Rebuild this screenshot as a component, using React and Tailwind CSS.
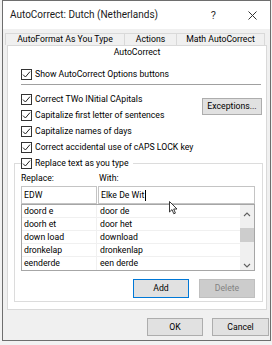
const ENTRIES = [
  ["doord e", "door de"],
  ["doorh et", "door het"],
  ["down load", "download"],
  ["dronkelap", "dronkenlap"],
  ["eenderde", "een derde"],
];

function Check() {
  return (
    <span className="w-[11px] h-[11px] border border-[#333333] bg-white flex items-center justify-center shrink-0">
      <svg width="9" height="9" viewBox="0 0 9 9">
        <path d="M1 4.6 L3.4 7 L8 1.6" fill="none" stroke="#222222" strokeWidth="1" />
      </svg>
    </span>
  );
}

function CheckRow({ label, className = "" }) {
  return (
    <div className={`flex items-center gap-[3px] h-[16px] ${className}`}>
      <Check />
      <span>{label}</span>
    </div>
  );
}

function Chevron({ up }) {
  return (
    <svg width="8" height="5" viewBox="0 0 8 5">
      <path d={up ? "M1 4 L4 1 L7 4" : "M1 1 L4 4 L7 1"} fill="none" stroke="#606060" strokeWidth="1.1" />
    </svg>
  );
}

export default function App() {
  return (
    <div className="w-[272px] h-[345px] bg-[#f2f2f2] overflow-hidden pl-[2px] font-['Roboto',sans-serif] text-[8.7px] text-black leading-none relative">
      <div className="w-[269px] h-[341px] border border-[#6e6e6e] bg-[#f0f0f0] flex flex-col">

        {/* title bar */}
        <div className="h-[28px] bg-white flex items-center pl-[7px] pr-[13px] shrink-0">
          <span className="text-[10px] text-[#1a1a1a]">AutoCorrect: Dutch (Netherlands)</span>
          <span className="ml-auto text-[11px] text-[#333]">?</span>
          <svg className="ml-[32px]" width="9" height="9" viewBox="0 0 9 9">
            <path d="M0.5 0.5 L8.5 8.5 M8.5 0.5 L0.5 8.5" stroke="#333" strokeWidth="1" />
          </svg>
        </div>

        {/* tabs */}
        <div className="pt-[4px] pl-[2px] flex h-[16px] shrink-0">
          <div className="w-[120px] h-[12px] border border-b-0 border-[#d9d9d9] flex items-center justify-center">AutoFormat As You Type</div>
          <div className="w-[52px] h-[12px] border border-b-0 border-l-0 border-[#d9d9d9] flex items-center justify-center">Actions</div>
          <div className="w-[88px] h-[12px] border border-b-0 border-l-0 border-[#d9d9d9] flex items-center justify-center">Math AutoCorrect</div>
        </div>

        {/* panel */}
        <div className="ml-[4px] w-[260px] h-[265px] border border-[#d9d9d9] bg-white shrink-0">
          <div className="h-[13px] flex items-center justify-center">AutoCorrect</div>

          <CheckRow label="Show AutoCorrect Options buttons" className="mt-[7px] ml-[13px] h-[15px]" />
          <div className="mt-[2px] ml-[13px] w-[240px] h-px bg-[#a0a0a0]" />

          <div className="mt-[6px] flex pl-[13px] pr-[4px]">
            <div className="flex flex-col">
              <CheckRow label="Correct TWo INitial CApitals" />
              <CheckRow label="Capitalize first letter of sentences" />
              <CheckRow label="Capitalize names of days" />
              <CheckRow label="Correct accidental use of cAPS LOCK key" />
            </div>
            <button className="ml-auto mt-[7px] w-[60px] h-[17px] bg-[#e1e1e1] border border-[#adadad] flex items-center justify-center">
              Exceptions...
            </button>
          </div>

          <fieldset className="ml-[6px] w-[249px] border border-[#dcdcdc] px-[6px] pb-[3px]">
            <legend className="pr-[4px]">
              <CheckRow label="Replace text as you type" />
            </legend>

            <div className="h-[14px] flex items-center">
              <span className="w-[78px]">Replace:</span>
              <span>With:</span>
            </div>

            <div className="mt-[1px] flex gap-[1px] h-[18px]">
              <div className="w-[76px] border border-[#c4c4c4] flex items-center pl-[2px]">EDW</div>
              <div className="w-[157px] border border-[#c4c4c4] flex items-center pl-[2px]">
                Elke De Wit
                <span className="w-px h-[11px] bg-black ml-[1px]" />
              </div>
            </div>

            <div className="w-[234px] h-[67px] border border-[#a6a6a6] flex">
              <div className="flex-1 flex flex-col">
                {ENTRIES.map(([from, to], i) => (
                  <div key={i} className="h-[13px] flex border-b border-[#f0f0f0] last:border-b-0">
                    <span className="w-[75px] border-r border-[#f0f0f0] pl-[2px] flex items-center">{from}</span>
                    <span className="pl-[3px] flex items-center">{to}</span>
                  </div>
                ))}
              </div>
              <div className="w-[14px] bg-[#f0f0f0] flex flex-col items-center">
                <div className="h-[18px] flex items-center justify-center"><Chevron up /></div>
                <div className="mt-[5px] w-[14px] h-[14px] bg-[#cdcdcd]" />
                <div className="flex-1" />
                <div className="h-[10px] flex items-center justify-center"><Chevron /></div>
              </div>
            </div>

            <div className="mt-[8px] flex justify-end gap-[10px] pr-[1px]">
              <button className="w-[56px] h-[19px] bg-[#e1e1e1] border border-[#0078d7] flex items-center justify-center">Add</button>
              <button className="w-[56px] h-[19px] bg-[#cccccc] border border-[#bfbfbf] text-[#838383] flex items-center justify-center">Delete</button>
            </div>
          </fieldset>
        </div>

        {/* footer buttons */}
        <div className="mt-[8px] flex justify-end gap-[9px] pr-[1px]">
          <button className="w-[56px] h-[18px] bg-[#e1e1e1] border border-[#adadad] flex items-center justify-center">OK</button>
          <button className="w-[57px] h-[18px] bg-[#e1e1e1] border border-[#adadad] flex items-center justify-center">Cancel</button>
        </div>
      </div>

      {/* mouse pointer */}
      <svg className="absolute left-[169px] top-[201px]" width="9" height="14" viewBox="0 0 9 14">
        <path d="M0.5 0.5 L0.5 11 L3 8.6 L4.8 12.8 L6.4 12.1 L4.7 8 L8 8 Z" fill="white" stroke="#222" strokeWidth="0.9" />
      </svg>
    </div>
  );
}
